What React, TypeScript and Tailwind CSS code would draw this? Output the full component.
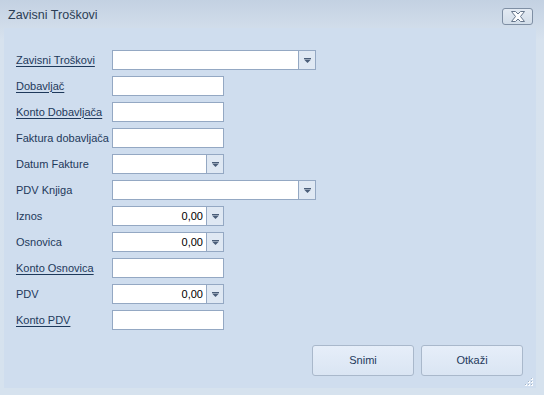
const rows: { label: string; link?: boolean; kind: 'wide' | 'text' | 'date' | 'num' }[] = [
  { label: 'Zavisni Troškovi', link: true, kind: 'wide' },
  { label: 'Dobavljač', link: true, kind: 'text' },
  { label: 'Konto Dobavljača', link: true, kind: 'text' },
  { label: 'Faktura dobavljača', kind: 'text' },
  { label: 'Datum Fakture', kind: 'date' },
  { label: 'PDV Knjiga', kind: 'wide' },
  { label: 'Iznos', kind: 'num' },
  { label: 'Osnovica', kind: 'num' },
  { label: 'Konto Osnovica', link: true, kind: 'text' },
  { label: 'PDV', kind: 'num' },
  { label: 'Konto PDV', link: true, kind: 'text' },
]

const grip = [
  [6, 0],
  [3, 3],
  [6, 3],
  [0, 6],
  [3, 6],
  [6, 6],
]

function DropButton() {
  return (
    <div className="flex h-full w-[17px] items-center justify-center border-l border-[#94a8c3] bg-[#dfe8f3]">
      <svg width="7" height="5" viewBox="0 0 7 5">
        <rect x="0" y="0" width="7" height="1" fill="#4a5d78" />
        <path d="M0 1.5 H7 L3.5 5 Z" fill="#4a5d78" />
      </svg>
    </div>
  )
}

function Field({ kind }: { kind: 'wide' | 'text' | 'date' | 'num' }) {
  const width = kind === 'wide' ? 'w-[204px]' : 'w-[112px]'
  return (
    <div className={`flex h-[20px] ${width} border border-[#94a8c3] bg-white`}>
      <div className="flex flex-1 items-center justify-end pr-[3px] text-[11px] text-black">
        {kind === 'num' ? '0,00' : ''}
      </div>
      {kind !== 'text' ? <DropButton /> : null}
    </div>
  )
}

export default function App() {
  return (
    <div
      className="flex h-[395px] w-[544px] flex-col bg-[linear-gradient(180deg,#c3d1e2_0%,#d7e2ee_10%,#d6e2ee_100%)] text-[#1e395b]"
      style={{ fontFamily: '"Liberation Sans", Arial, sans-serif' }}
    >
      <div className="flex h-[28px] shrink-0 items-center justify-between pl-2 pr-[11px]">
        <span className="pt-[2px] text-[12.5px] text-[#2c3e55]">Zavisni Troškovi</span>
        <button className="mt-[5px] flex h-[17px] w-[31px] items-center justify-center rounded-[3px] border border-[#7f8fa4] bg-[linear-gradient(180deg,#e3eaf3,#d2dde9)]">
          <svg width="16" height="11" viewBox="0 0 16 11">
            <path
              d="M1.5 0.5 H5.5 L8 3 L10.5 0.5 H14.5 L10.5 5.5 L14.5 10.5 H10.5 L8 8 L5.5 10.5 H1.5 L5.5 5.5 Z"
              fill="#fbfcfe"
              stroke="#66768b"
              strokeWidth="1"
              strokeLinejoin="round"
            />
          </svg>
        </button>
      </div>

      <div className="relative mb-[7px] ml-1 mr-2 flex flex-1 flex-col bg-[#cfddee] pl-3 pt-[22px]">
        <div className="flex flex-col gap-[6px]">
          {rows.map((row) => (
            <div key={row.label} className="flex h-[20px] items-center">
              <span className={`w-[96px] text-[11px] ${row.link ? 'underline underline-offset-[2px]' : ''}`}>
                {row.label}
              </span>
              <Field kind={row.kind} />
            </div>
          ))}
        </div>

        <div className="mt-[15px] flex justify-end gap-[7px] pr-[13px]">
          {['Snimi', 'Otkaži'].map((label) => (
            <button
              key={label}
              className="flex h-[31px] w-[102px] items-center justify-center rounded-[3px] border border-[#a9b8cb] bg-[linear-gradient(180deg,#e6eef9_0%,#dae5f3_100%)] text-[11px] text-[#1e395b]"
            >
              {label}
            </button>
          ))}
        </div>

        <svg className="absolute bottom-[2px] right-[3px]" width="8" height="8" viewBox="0 0 8 8">
          {grip.map(([x, y]) => (
            <rect key={`${x}-${y}`} x={x} y={y} width="2" height="2" fill="#ffffff" opacity="0.9" />
          ))}
          {grip.map(([x, y]) => (
            <rect key={`d${x}-${y}`} x={x} y={y} width="1" height="1" fill="#a3b4c8" />
          ))}
        </svg>
      </div>
    </div>
  )
}
